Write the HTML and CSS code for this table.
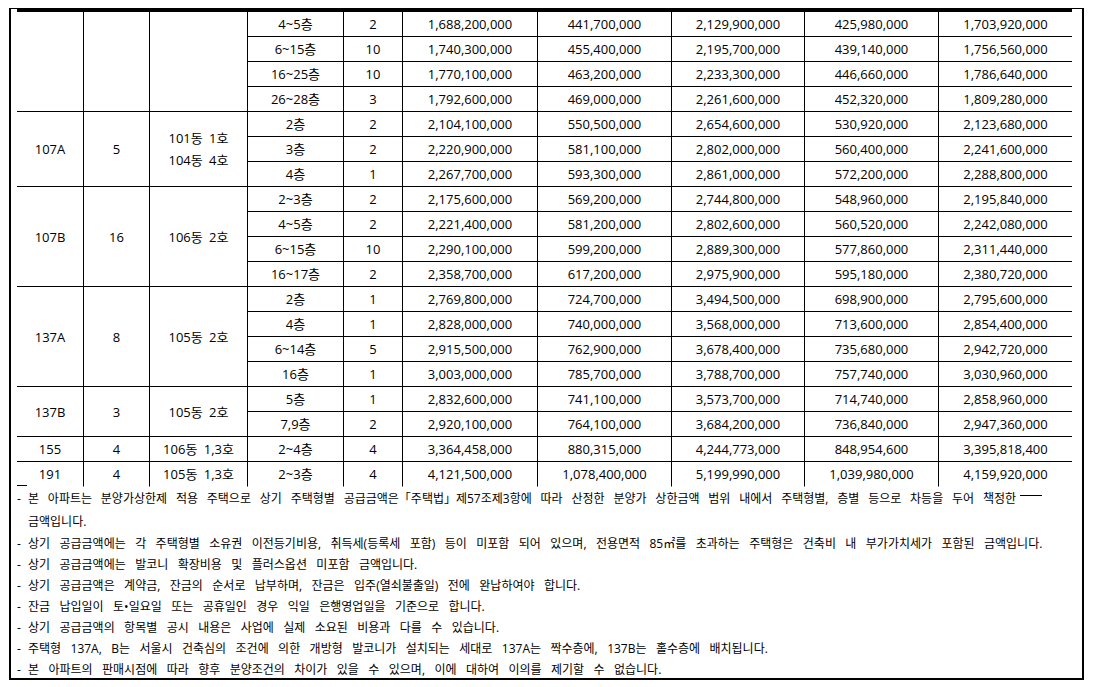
FILE: index.html
```html
<!DOCTYPE html>
<html lang="ko">
<head>
<meta charset="utf-8">
<title>공급금액표</title>
<link rel="stylesheet" href="styles.css">
</head>
<body>
<div class="frame">
  <table class="price">
    <colgroup>
      <col class="w66"><col class="w66"><col class="w98"><col class="w96"><col class="w59">
      <col class="w135"><col class="w134"><col class="w133"><col class="w134"><col class="w134">
    </colgroup>
    <tbody>
      <tr><td class="c1" rowspan="4"></td><td rowspan="4"></td><td rowspan="4"></td><td>4~5층</td><td>2</td><td>1,688,200,000</td><td>441,700,000</td><td>2,129,900,000</td><td>425,980,000</td><td>1,703,920,000</td></tr>
      <tr><td>6~15층</td><td>10</td><td>1,740,300,000</td><td>455,400,000</td><td>2,195,700,000</td><td>439,140,000</td><td>1,756,560,000</td></tr>
      <tr><td>16~25층</td><td>10</td><td>1,770,100,000</td><td>463,200,000</td><td>2,233,300,000</td><td>446,660,000</td><td>1,786,640,000</td></tr>
      <tr><td>26~28층</td><td>3</td><td>1,792,600,000</td><td>469,000,000</td><td>2,261,600,000</td><td>452,320,000</td><td>1,809,280,000</td></tr>

      <tr><td class="c1" rowspan="3">107A</td><td rowspan="3">5</td><td rowspan="3" class="two">101동 1호<br>104동 4호</td><td>2층</td><td>2</td><td>2,104,100,000</td><td>550,500,000</td><td>2,654,600,000</td><td>530,920,000</td><td>2,123,680,000</td></tr>
      <tr><td>3층</td><td>2</td><td>2,220,900,000</td><td>581,100,000</td><td>2,802,000,000</td><td>560,400,000</td><td>2,241,600,000</td></tr>
      <tr><td>4층</td><td>1</td><td>2,267,700,000</td><td>593,300,000</td><td>2,861,000,000</td><td>572,200,000</td><td>2,288,800,000</td></tr>

      <tr><td class="c1" rowspan="4">107B</td><td rowspan="4">16</td><td rowspan="4">106동 2호</td><td>2~3층</td><td>2</td><td>2,175,600,000</td><td>569,200,000</td><td>2,744,800,000</td><td>548,960,000</td><td>2,195,840,000</td></tr>
      <tr><td>4~5층</td><td>2</td><td>2,221,400,000</td><td>581,200,000</td><td>2,802,600,000</td><td>560,520,000</td><td>2,242,080,000</td></tr>
      <tr><td>6~15층</td><td>10</td><td>2,290,100,000</td><td>599,200,000</td><td>2,889,300,000</td><td>577,860,000</td><td>2,311,440,000</td></tr>
      <tr><td>16~17층</td><td>2</td><td>2,358,700,000</td><td>617,200,000</td><td>2,975,900,000</td><td>595,180,000</td><td>2,380,720,000</td></tr>

      <tr><td class="c1" rowspan="4">137A</td><td rowspan="4">8</td><td rowspan="4">105동 2호</td><td>2층</td><td>1</td><td>2,769,800,000</td><td>724,700,000</td><td>3,494,500,000</td><td>698,900,000</td><td>2,795,600,000</td></tr>
      <tr><td>4층</td><td>1</td><td>2,828,000,000</td><td>740,000,000</td><td>3,568,000,000</td><td>713,600,000</td><td>2,854,400,000</td></tr>
      <tr><td>6~14층</td><td>5</td><td>2,915,500,000</td><td>762,900,000</td><td>3,678,400,000</td><td>735,680,000</td><td>2,942,720,000</td></tr>
      <tr><td>16층</td><td>1</td><td>3,003,000,000</td><td>785,700,000</td><td>3,788,700,000</td><td>757,740,000</td><td>3,030,960,000</td></tr>

      <tr><td class="c1" rowspan="2">137B</td><td rowspan="2">3</td><td rowspan="2">105동 2호</td><td>5층</td><td>1</td><td>2,832,600,000</td><td>741,100,000</td><td>3,573,700,000</td><td>714,740,000</td><td>2,858,960,000</td></tr>
      <tr><td>7,9층</td><td>2</td><td>2,920,100,000</td><td>764,100,000</td><td>3,684,200,000</td><td>736,840,000</td><td>2,947,360,000</td></tr>

      <tr><td class="c1">155</td><td>4</td><td>106동 1,3호</td><td>2~4층</td><td>4</td><td>3,364,458,000</td><td>880,315,000</td><td>4,244,773,000</td><td>848,954,600</td><td>3,395,818,400</td></tr>

      <tr class="last"><td class="c1">191</td><td>4</td><td>105동 1,3호</td><td>2~3층</td><td>4</td><td>4,121,500,000</td><td>1,078,400,000</td><td>5,199,990,000</td><td>1,039,980,000</td><td>4,159,920,000</td></tr>
    </tbody>
  </table>

  <ul class="notes">
    <li class="note first"><span class="dash">-</span><span class="txt">본 아파트는 분양가상한제 적용 주택으로 상기 주택형별 공급금액은「주택법」제57조제3항에 따라 산정한 분양가 상한금액 범위 내에서 주택형별, 층별 등으로 차등을 두어 책정한<br>금액입니다.</span></li>
    <li class="note"><span class="dash">-</span><span class="txt">상기 공급금액에는 각 주택형별 소유권 이전등기비용, 취득세(등록세 포함) 등이 미포함 되어 있으며, 전용면적 85㎡를 초과하는 주택형은 건축비 내 부가가치세가 포함된 금액입니다.</span></li>
    <li class="note"><span class="dash">-</span><span class="txt">상기 공급금액에는 발코니 확장비용 및 플러스옵션 미포함 금액입니다.</span></li>
    <li class="note"><span class="dash">-</span><span class="txt">상기 공급금액은 계약금, 잔금의 순서로 납부하며, 잔금은 입주(열쇠불출일) 전에 완납하여야 합니다.</span></li>
    <li class="note"><span class="dash">-</span><span class="txt">잔금 납입일이 토•일요일 또는 공휴일인 경우 익일 은행영업일을 기준으로 합니다.</span></li>
    <li class="note"><span class="dash">-</span><span class="txt">상기 공급금액의 항목별 공시 내용은 사업에 실제 소요된 비용과 다를 수 있습니다.</span></li>
    <li class="note"><span class="dash">-</span><span class="txt">주택형 137A, B는 서울시 건축심의 조건에 의한 개방형 발코니가 설치되는 세대로 137A는 짝수층에, 137B는 홀수층에 배치됩니다.</span></li>
    <li class="note"><span class="dash">-</span><span class="txt">본 아파트의 판매시점에 따라 향후 분양조건의 차이가 있을 수 있으며, 이에 대하여 이의를 제기할 수 없습니다.</span></li>
  </ul>
</div>
</body>
</html>
```
FILE: styles.css
```css
html, body {
  margin: 0;
  padding: 0;
  background: #fff;
}
body {
  font-family: "Open Sans", "Noto Sans CJK KR", sans-serif;
  color: #000;
}
.frame {
  box-sizing: border-box;
  margin: 8px 0 0 9px;
  width: 1075px;
  height: 672px;
  border-top: 1px solid #000;
  border-left: 2px solid #000;
  border-right: 2px solid #000;
  border-bottom: 2px solid #000;
  padding: 0 10px 0 6px;
}
.price {
  table-layout: fixed;
  width: 1055px;
  border-collapse: separate;
  border-spacing: 0;
  border-top: 3px solid #000;
  font-size: 13px;
  word-spacing: 3px;
}
.w66 { width: 66px; }
.w98 { width: 98px; }
.w96 { width: 96px; }
.w59 { width: 59px; }
.w135 { width: 135px; }
.w134 { width: 134px; }
.w133 { width: 133px; }
.price td {
  box-sizing: border-box;
  height: 25px;
  padding: 0;
  text-align: center;
  vertical-align: middle;
  line-height: 22px;
  border-left: 1px solid #000;
  border-bottom: 1px solid #000;
  white-space: nowrap;
}
.price td.c1 {
  border-left: none;
}
.price .last td {
  border-bottom-color: transparent;
}
.price .last td.c1 {
  background: linear-gradient(#000, #000) no-repeat left bottom / 10px 1px;
}
.price td.two {
  line-height: 22px;
}
.notes {
  list-style: none;
  margin: 0;
  padding: 0;
  font-size: 12px;
  word-spacing: 6.3px;
  background: linear-gradient(#000, #000) no-repeat 1003px 8px / 22px 1px;
}
.note {
  display: flex;
  line-height: 21px;
  white-space: nowrap;
}
.note.first {
  line-height: 23px;
  word-spacing: 5.7px;
}
.dash {
  flex: none;
  width: 11px;
}
.txt {
  flex: none;
}
```
